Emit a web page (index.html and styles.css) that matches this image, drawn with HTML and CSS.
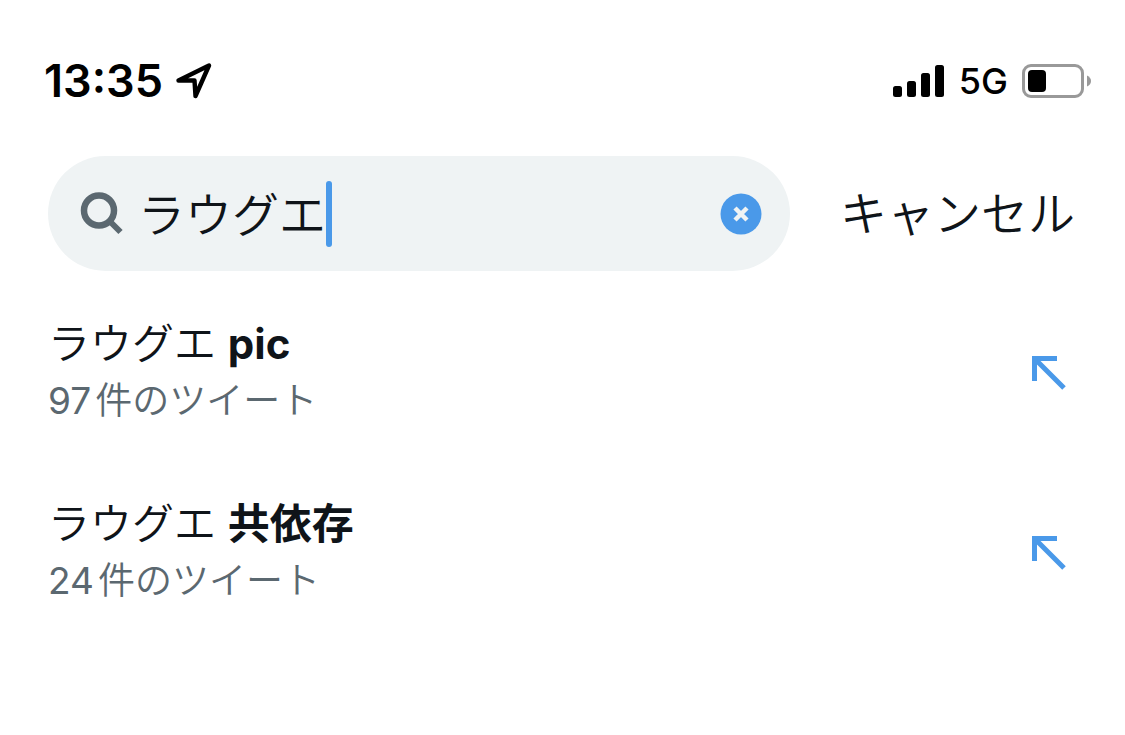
FILE: index.html
```html
<!DOCTYPE html>
<html lang="ja">
<head>
<meta charset="utf-8">
<meta name="viewport" content="width=device-width, initial-scale=1">
<title>検索</title>
<link rel="stylesheet" href="styles.css">
</head>
<body>
<header class="status">
  <div class="status-group">
    <time class="clock">13:35</time>
    <svg class="location" width="36" height="36" viewBox="0 0 36 36" aria-hidden="true"><path d="M2.5 17.5 33 2.5 19.5 33 18.5 17.5Z" fill="none" stroke="#000" stroke-width="4.4" stroke-linejoin="round"/></svg>
  </div>
  <div class="status-group status-right">
    <svg width="52" height="32" viewBox="0 0 52 32" aria-hidden="true"><rect y="21" width="9" height="11" rx="2.5"/><rect x="14" y="16" width="9" height="16" rx="2.5"/><rect x="28" y="8" width="9" height="24" rx="2.5"/><rect x="42" width="9" height="32" rx="2.5"/></svg>
    <span class="network">5G</span>
    <svg width="70" height="34" viewBox="0 0 70 34" aria-hidden="true"><rect x="1.5" y="1.5" width="59" height="31" rx="7.5" fill="none" stroke="#999" stroke-width="3"/><rect x="6" y="6" width="18" height="22" rx="4"/><path d="M65 11.500Q69 13.500 69 17T65 22.500Z" fill="#999"/></svg>
  </div>
</header>
<main>
  <form class="search">
    <div class="search-box">
      <svg class="search-icon" width="43" height="43" viewBox="0 0 43 43" aria-hidden="true"><circle cx="19" cy="18.500" r="15" fill="none" stroke="#5b6870" stroke-width="6.500"/><path d="m29.500 29 11 11" stroke="#5b6870" stroke-width="6"/></svg>
      <input class="query" type="text" value="ラウグエ" aria-label="検索">
      <span class="caret"></span>
      <button class="clear" type="button" aria-label="クリア"><svg width="42" height="42" viewBox="0 0 42 42" aria-hidden="true"><circle cx="21" cy="21" r="20.500" fill="#4a99e9"/><path d="m15 15 12 12M27 15 15 27" stroke="#eff3f4" stroke-width="4.500"/></svg></button>
    </div>
    <button class="cancel" type="button">キャンセル</button>
  </form>
  <ul class="results">
    <li><a class="result" href="#">
      <span class="result-text"><span class="title">ラウグエ <b>pic</b></span><span class="count"><span class="number">97</span>件のツイート</span></span>
      <svg width="34" height="34" viewBox="0 0 34 34" aria-hidden="true"><path d="M2.500 25V2.500H25M3 3l29 29" fill="none" stroke="#4a99e9" stroke-width="5"/></svg>
    </a></li>
    <li><a class="result" href="#">
      <span class="result-text"><span class="title">ラウグエ <b>共依存</b></span><span class="count"><span class="number">24</span>件のツイート</span></span>
      <svg width="34" height="34" viewBox="0 0 34 34" aria-hidden="true"><path d="M2.500 25V2.500H25M3 3l29 29" fill="none" stroke="#4a99e9" stroke-width="5"/></svg>
    </a></li>
  </ul>
</main>
</body>
</html>
```
FILE: styles.css
```css
* { box-sizing: border-box; }
body {
  margin: 0;
  background: #fff;
  color: #0f1419;
  font-family: Inter, "Noto Sans CJK JP", sans-serif;
}
svg { display: block; flex: none; }
button, input {
  margin: 0;
  padding: 0;
  border: 0;
  background: none;
  color: inherit;
  font: inherit;
}
.status {
  display: flex;
  justify-content: space-between;
  align-items: center;
  padding: 52px 33px 0 44px;
  color: #000;
}
.status-group { display: flex; align-items: center; gap: 13px; }
.status-right { gap: 14px; }
.clock { font-size: 45px; line-height: 56px; font-weight: 600; }
.network { font-size: 36px; line-height: 58px; font-weight: 500; }
.search {
  display: flex;
  align-items: center;
  gap: 50px;
  padding: 46px 50px 0 48px;
}
.search-box {
  display: flex;
  flex: 1;
  align-items: center;
  min-width: 0;
  height: 115px;
  padding: 0 28px 0 32px;
  border-radius: 58px;
  background: #eff3f4;
}
.query {
  width: 188px;
  height: 66px;
  margin-left: 15px;
  padding-bottom: 4px;
  font-size: 47px;
  font-weight: 350;
  outline: none;
}
.caret {
  width: 6px;
  height: 66px;
  border-radius: 3px;
  background: #4a99e9;
}
.clear { margin-left: auto; }
.cancel { font-size: 47px; line-height: 66px; font-weight: 350; white-space: nowrap; }
.results { margin: 0; padding: 45px 0 0; list-style: none; }
.result {
  display: flex;
  align-items: center;
  justify-content: space-between;
  padding: 0 59px 66px 48px;
  color: inherit;
  text-decoration: none;
}
.result-text { display: flex; flex-direction: column; }
.title { font-size: 42px; line-height: 56px; font-weight: 350; }
.title b { font-weight: 700; }
.count { color: #5b6870; font-size: 37px; line-height: 58px; font-weight: 350; }
.number { margin-right: 4px; font-weight: 400; }
```
